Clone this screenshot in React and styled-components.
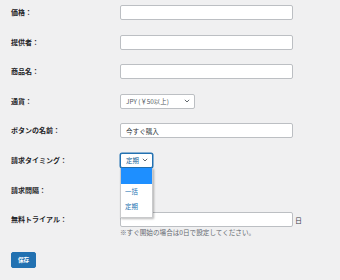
import React from "react";
import styled, { createGlobalStyle } from "styled-components";

const GlobalStyle = createGlobalStyle`
  html, body {
    margin: 0;
    padding: 0;
    background: #f0f0f1;
  }
  body {
    font-family: "Noto Sans CJK JP", "Noto Sans", sans-serif;
    color: #1d2327;
  }
`;

const Page = styled.div`
  width: 340px;
  height: 280px;
  padding: 5px 0 0 11px;
  box-sizing: border-box;
  overflow: hidden;
`;

const Row = styled.div`
  display: grid;
  grid-template-columns: 109px 1fr;
  align-items: ${(p) => (p.$top ? "start" : "center")};
  min-height: 15px;
  margin-bottom: 14.6px;
`;

const Label = styled.label`
  font-size: 7px;
  font-weight: 700;
  line-height: 15px;
  color: #1d2327;
  white-space: nowrap;
`;

const Field = styled.div`
  position: relative;
  display: flex;
  flex-direction: column;
  align-items: flex-start;
`;

const Inline = styled.div`
  display: flex;
  align-items: center;
  gap: 2px;
`;

const Input = styled.input`
  box-sizing: border-box;
  width: ${(p) => p.$w || 173}px;
  height: 15px;
  margin: 0;
  padding: 0 5px;
  border: 1px solid #bcbfc3;
  border-radius: 2px;
  background: #fff;
  font-family: inherit;
  font-size: 6.6px;
  color: #2c3338;
  outline: none;
`;

const Select = styled.div`
  box-sizing: border-box;
  width: ${(p) => p.$w}px;
  height: 15px;
  display: flex;
  align-items: center;
  justify-content: space-between;
  padding: 0 4px 0 5px;
  border: 1px solid ${(p) => (p.$focus ? "#2271b1" : "#bcbfc3")};
  box-shadow: ${(p) => (p.$focus ? "0 0 0 0.5px #2271b1" : "none")};
  border-radius: 2px;
  background: #fff;
  font-size: 6.4px;
  color: ${(p) => (p.$focus ? "#135e96" : "#50575e")};
  white-space: nowrap;
`;

const Menu = styled.div`
  position: absolute;
  top: 15px;
  left: 0;
  width: 31px;
  background: #fff;
  border: 1px solid #c9cacc;
  border-top: none;
  box-shadow: 1px 1px 2px rgba(0, 0, 0, 0.28);
  z-index: 5;
  padding-bottom: 2px;
`;

const Option = styled.div`
  height: ${(p) => (p.$blank ? 16 : 15.5)}px;
  line-height: ${(p) => (p.$blank ? 16 : 15.5)}px;
  padding-left: 4px;
  font-size: 6.4px;
  color: #2271b1;
  background: ${(p) => (p.$active ? "#1e8fff" : "#fff")};
`;

const Unit = styled.span`
  font-size: 7px;
  color: #3c434a;
`;

const Hint = styled.p`
  margin: 1px 0 0;
  font-size: 6.6px;
  line-height: 9px;
  color: #646970;
  white-space: nowrap;
`;

const SaveButton = styled.button`
  display: block;
  margin-top: 2px;
  width: 25px;
  height: 16px;
  padding: 0;
  border: 1px solid #2271b1;
  border-radius: 2px;
  background: #2271b1;
  color: #fff;
  font-family: inherit;
  font-size: 5.6px;
  font-weight: 700;
`;

const Chevron = () => (
  <svg width="6" height="4" viewBox="0 0 6 4">
    <path d="M0.8 0.8 L3 3 L5.2 0.8" fill="none" stroke="#50575e" strokeWidth="0.9" />
  </svg>
);

export default function App() {
  return (
    <>
      <GlobalStyle />
      <Page>
        <Row>
          <Label>価格：</Label>
          <Field><Input /></Field>
        </Row>
        <Row>
          <Label>提供者：</Label>
          <Field><Input /></Field>
        </Row>
        <Row>
          <Label>商品名：</Label>
          <Field><Input /></Field>
        </Row>
        <Row>
          <Label>通貨：</Label>
          <Field>
            <Select $w={75}>
              <span>JPY (￥50以上)</span>
              <Chevron />
            </Select>
          </Field>
        </Row>
        <Row>
          <Label>ボタンの名前：</Label>
          <Field><Input defaultValue="今すぐ購入" /></Field>
        </Row>
        <Row>
          <Label>請求タイミング：</Label>
          <Field>
            <Select $w={33} $focus>
              <span>定期</span>
              <Chevron />
            </Select>
            <Menu>
              <Option $blank $active />
              <Option>一括</Option>
              <Option>定期</Option>
            </Menu>
          </Field>
        </Row>
        <Row>
          <Label>請求間隔：</Label>
          <Field />
        </Row>
        <Row $top>
          <Label>無料トライアル：</Label>
          <Field>
            <Inline>
              <Input />
              <Unit>日</Unit>
            </Inline>
            <Hint>※すぐ開始の場合は0日で設定してください。</Hint>
          </Field>
        </Row>
        <SaveButton>保存</SaveButton>
      </Page>
    </>
  );
}
